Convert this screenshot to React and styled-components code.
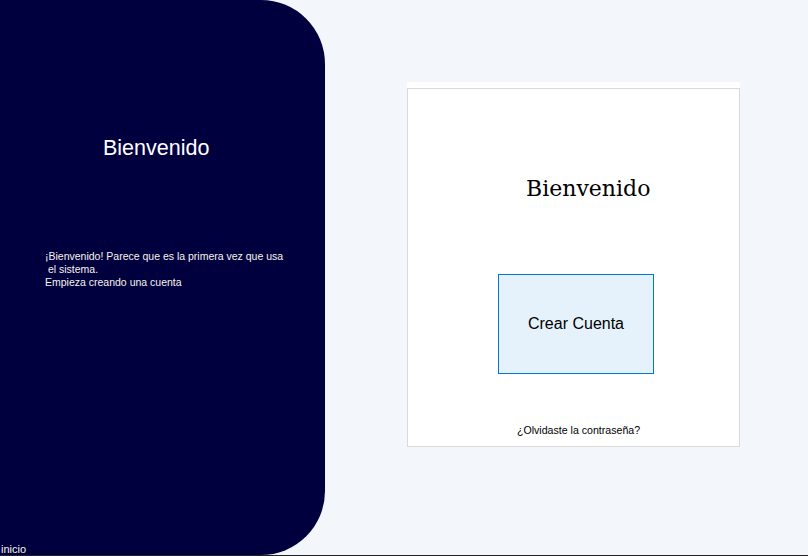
import React from "react";
import styled, { createGlobalStyle } from "styled-components";

const GlobalStyle = createGlobalStyle`
  html, body {
    margin: 0;
    padding: 0;
    background: #f3f6fb;
  }
  * {
    box-sizing: border-box;
  }
`;

const Window = styled.div`
  display: flex;
  width: 808px;
  height: 556px;
  background: #f3f6fb;
  border-bottom: 1px solid #222;
  font-family: "Liberation Sans", Arial, sans-serif;
  overflow: hidden;
`;

const SidePanel = styled.div`
  display: flex;
  flex-direction: column;
  width: 325px;
  height: 555px;
  flex-shrink: 0;
  background: #01003f;
  border-radius: 0 64px 64px 0;
`;

const SideTitle = styled.h1`
  margin: 136px 0 0 103px;
  font-size: 21.5px;
  line-height: 24px;
  font-weight: 400;
  color: #ffffff;
`;

const SideText = styled.p`
  margin: 90px 0 0 45px;
  font-size: 10.5px;
  line-height: 13px;
  color: #f7f4e8;
  white-space: pre;
`;

const FormLabel = styled.span`
  margin: auto 0 0 1px;
  font-size: 11px;
  line-height: 12px;
  color: #f7f4e8;
`;

const Content = styled.main`
  flex: 1;
  padding: 82px 0 0 82px;
`;

const Card = styled.section`
  width: 333px;
  height: 365px;
  background: #ffffff;
  padding-top: 6px;
`;

const Group = styled.div`
  display: flex;
  flex-direction: column;
  align-items: flex-start;
  width: 333px;
  height: 359px;
  border: 1px solid #d9d9d9;
`;

const CardTitle = styled.h2`
  margin: 87px 0 0 118px;
  font-family: "DejaVu Serif", "Liberation Serif", serif;
  font-size: 22px;
  line-height: 26px;
  font-weight: 400;
  color: #000;
`;

const PrimaryButton = styled.button`
  margin: 72px 0 0 90px;
  width: 156px;
  height: 100px;
  background: #e5f1fb;
  border: 1px solid #0078d7;
  font-family: "Liberation Sans", Arial, sans-serif;
  font-size: 16px;
  color: #000;
  cursor: pointer;
`;

const LinkText = styled.a`
  margin: 50px 0 0 109px;
  font-size: 10.6px;
  line-height: 13px;
  color: #000;
  text-decoration: none;
  cursor: pointer;
`;

export default function App() {
  return (
    <>
      <GlobalStyle />
      <Window>
        <SidePanel>
          <SideTitle>Bienvenido</SideTitle>
          <SideText>
            {"¡Bienvenido! Parece que es la primera vez que usa\n el sistema.\nEmpieza creando una cuenta"}
          </SideText>
          <FormLabel>inicio</FormLabel>
        </SidePanel>
        <Content>
          <Card>
            <Group>
              <CardTitle>Bienvenido</CardTitle>
              <PrimaryButton>Crear Cuenta</PrimaryButton>
              <LinkText>¿Olvidaste la contraseña?</LinkText>
            </Group>
          </Card>
        </Content>
      </Window>
    </>
  );
}
